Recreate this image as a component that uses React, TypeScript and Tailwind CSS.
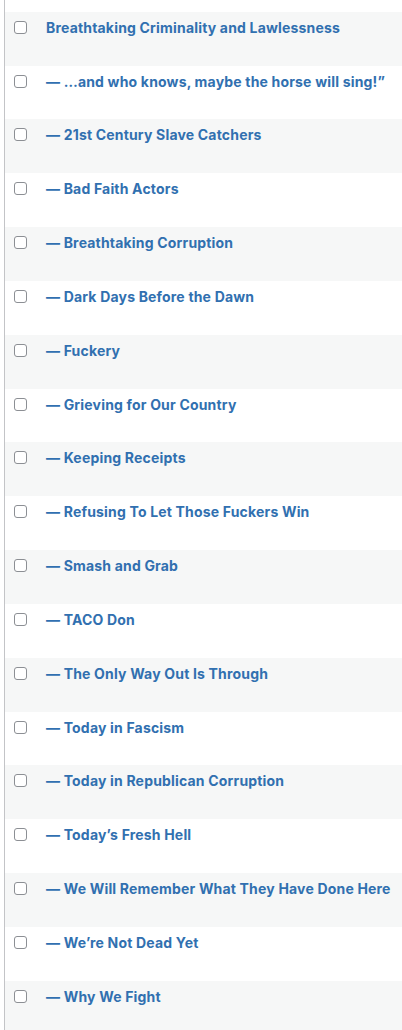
const terms = [
  "Breathtaking Criminality and Lawlessness",
  "— …and who knows, maybe the horse will sing!”",
  "— 21st Century Slave Catchers",
  "— Bad Faith Actors",
  "— Breathtaking Corruption",
  "— Dark Days Before the Dawn",
  "— Fuckery",
  "— Grieving for Our Country",
  "— Keeping Receipts",
  "— Refusing To Let Those Fuckers Win",
  "— Smash and Grab",
  "— TACO Don",
  "— The Only Way Out Is Through",
  "— Today in Fascism",
  "— Today in Republican Corruption",
  "— Today’s Fresh Hell",
  "— We Will Remember What They Have Done Here",
  "— We’re Not Dead Yet",
  "— Why We Fight",
];

export default function App() {
  return (
    <div className="h-[1030px] w-[402px] overflow-hidden bg-white pl-1 font-['Inter','Liberation_Sans',sans-serif]">
      <div className="h-full border-l border-[#c3c4c7] pt-[11.8px]">
        {terms.map((term, i) => (
          <div
            key={term}
            className={`h-[53.83px] ${i % 2 === 0 ? "bg-[#f6f7f7]" : "bg-white"}`}
          >
            <div className="flex h-[31px] items-center pl-[9px]">
              <span className="h-[13px] w-[13px] shrink-0 rounded-[3px] border border-[#8c8f94] bg-white" />
              <a className="ml-[19px] whitespace-nowrap text-[14px] font-bold tracking-[0.18px] text-[#3170b0]">
                {term}
              </a>
            </div>
          </div>
        ))}
      </div>
    </div>
  );
}
